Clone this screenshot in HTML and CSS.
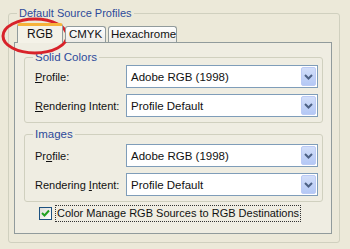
FILE: index.html
```html
<!DOCTYPE html>
<html>
<head>
<meta charset="utf-8">
<link rel="stylesheet" href="styles.css">
</head>
<body>
<fieldset class="outer">
  <legend class="outer-title">Default Source Profiles</legend>
  <div class="tabs">
    <div class="tab tab-active">RGB</div>
    <div class="tab">CMYK</div>
    <div class="tab">Hexachrome</div>
  </div>
  <div class="panel">
    <fieldset class="group">
      <legend class="group-title">Solid Colors</legend>
      <div class="row">
        <span class="label"><u>P</u>rofile:</span>
        <div class="select"><span class="select-text">Adobe RGB (1998)</span><span class="drop"><svg width="9" height="6" viewBox="0 0 9 6"><path d="M1 1 L4.5 4.5 L8 1" fill="none" stroke="#4d6185" stroke-width="2"/></svg></span></div>
      </div>
      <div class="row">
        <span class="label"><u>R</u>endering Intent:</span>
        <div class="select"><span class="select-text">Profile Default</span><span class="drop"><svg width="9" height="6" viewBox="0 0 9 6"><path d="M1 1 L4.5 4.5 L8 1" fill="none" stroke="#4d6185" stroke-width="2"/></svg></span></div>
      </div>
    </fieldset>
    <fieldset class="group group-images">
      <legend class="group-title">Images</legend>
      <div class="row">
        <span class="label">Pr<u>o</u>file:</span>
        <div class="select"><span class="select-text">Adobe RGB (1998)</span><span class="drop"><svg width="9" height="6" viewBox="0 0 9 6"><path d="M1 1 L4.5 4.5 L8 1" fill="none" stroke="#4d6185" stroke-width="2"/></svg></span></div>
      </div>
      <div class="row">
        <span class="label">Rendering <u>I</u>ntent:</span>
        <div class="select"><span class="select-text">Profile Default</span><span class="drop"><svg width="9" height="6" viewBox="0 0 9 6"><path d="M1 1 L4.5 4.5 L8 1" fill="none" stroke="#4d6185" stroke-width="2"/></svg></span></div>
      </div>
    </fieldset>
    <div class="check-row">
      <span class="checkbox"><svg width="9" height="9" viewBox="0 0 9 9"><path d="M1 4 L3.5 6.5 L8 1.5" fill="none" stroke="#21a121" stroke-width="2"/></svg></span>
      <span class="check-label">Color Manage RGB Sources to RGB Destinations</span>
    </div>
  </div>
</fieldset>
<svg class="circle" width="74" height="42" viewBox="0 0 74 42"><ellipse cx="36" cy="20" rx="32" ry="17" fill="none" stroke="#d8232a" stroke-width="3"/></svg>
</body>
</html>
```

FILE: styles.css
```css
html, body {
  margin: 0;
  padding: 0;
  background: #ece9d9;
  width: 350px;
  height: 249px;
  overflow: hidden;
  font-family: "Liberation Sans", Arial, sans-serif;
  font-size: 11px;
  color: #111;
  white-space: nowrap;
}

.outer {
  margin: 7px 0 0 8px;
  width: 332px;
  height: 236px;
  box-sizing: border-box;
  border: 1px solid #d0d0bf;
  border-radius: 3px;
  padding: 4px 7px 0 5px;
}

.outer-title {
  margin-left: 3px;
  padding: 0 2px;
  line-height: 12px;
  font-size: 11px;
  color: #2d4a9a;
}

.tabs {
  display: flex;
  align-items: flex-end;
  height: 19px;
  margin-left: 3px;
  position: relative;
  z-index: 1;
}

.tab {
  box-sizing: border-box;
  height: 16px;
  line-height: 14px;
  padding: 0 2px;
  border: 1px solid #919b9c;
  border-bottom: none;
  border-radius: 3px 3px 0 0;
  background: linear-gradient(#fefefe, #ecebe6);
  margin-right: 2px;
  text-align: center;
  font-size: 11.5px;
}

.tab:nth-child(2) { width: 41px; }
.tab:nth-child(3) { width: 69px; }

.tab-active {
  width: 46px;
  height: 20px;
  line-height: 17px;
  border-top: 3px solid #f6b33a;
  background: #f4f2e8;
  margin-bottom: -1px;
  font-size: 12px;
}

.panel {
  box-sizing: border-box;
  width: 318px;
  height: 192px;
  border: 1px solid #919b9c;
  background: #efede2;
  padding: 8px 8px 0 9px;
}

.group {
  margin: 0;
  width: 299px;
  box-sizing: border-box;
  border: 1px solid #d0d0bf;
  border-radius: 3px;
  padding: 2px 3px 5px 10px;
}

.group-images {
  margin-top: 5px;
  padding-top: 4px;
}

.group-title {
  padding: 0 2px;
  margin-left: -2px;
  line-height: 12px;
  font-size: 11.5px;
  color: #2d4a9a;
}

.row {
  display: flex;
  align-items: center;
  height: 23px;
}

.row + .row {
  margin-top: 6px;
}

.label {
  width: 91px;
  flex: none;
}

.select {
  box-sizing: border-box;
  width: 192px;
  height: 23px;
  border: 1px solid #7f9db9;
  background: #fff;
  display: flex;
  align-items: center;
  padding: 1px 1px 1px 4px;
  font-size: 11.5px;
}

.select-text {
  flex: 1;
}

.drop {
  box-sizing: border-box;
  width: 15px;
  height: 19px;
  border: 1px solid #bccbf5;
  border-radius: 2px;
  background: linear-gradient(#d2def9, #b4c8f5);
  display: flex;
  align-items: center;
  justify-content: center;
}

.check-row {
  display: flex;
  align-items: center;
  margin-top: 3px;
  margin-left: 15px;
  height: 16px;
}

.checkbox {
  box-sizing: border-box;
  width: 13px;
  height: 13px;
  border: 1px solid #1c5180;
  background: linear-gradient(135deg, #dcdcd7, #fff);
  display: flex;
  align-items: center;
  justify-content: center;
  margin-right: 3px;
}

.check-label {
  border: 1px dotted #333;
  padding: 1px 1px;
  line-height: 13px;
}

.circle {
  position: absolute;
  left: -1px;
  top: 16px;
}
```
